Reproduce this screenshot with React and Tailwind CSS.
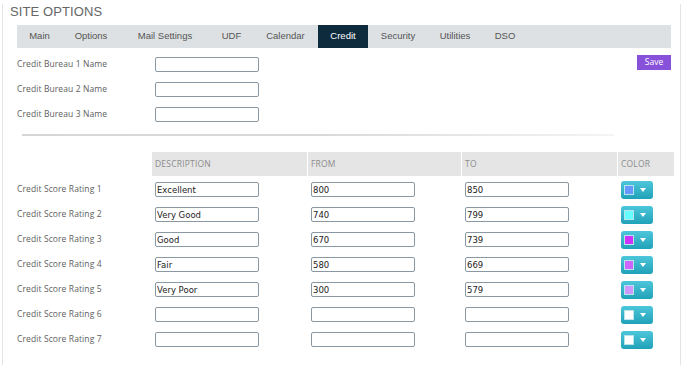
import React from 'react';

const tabs = [
  { name: 'Main', w: 'w-[45px]' },
  { name: 'Options', w: 'w-[58px]' },
  { name: 'Mail Settings', w: 'w-[90px]' },
  { name: 'UDF', w: 'w-[43px]' },
  { name: 'Calendar', w: 'w-[65px]' },
  { name: 'Credit', w: 'w-[50px]', active: true },
  { name: 'Security', w: 'w-[60px]' },
  { name: 'Utilities', w: 'w-[54px]' },
  { name: 'DSO', w: 'w-[46px]' },
];

const ratings = [
  { desc: 'Excellent', from: '800', to: '850', color: 'bg-[#6699ff]' },
  { desc: 'Very Good', from: '740', to: '799', color: 'bg-[#66ffff]' },
  { desc: 'Good', from: '670', to: '739', color: 'bg-[#cc33ff]' },
  { desc: 'Fair', from: '580', to: '669', color: 'bg-[#cc66ff]' },
  { desc: 'Very Poor', from: '300', to: '579', color: 'bg-[#cc99ff]' },
  { desc: '', from: '', to: '', color: 'bg-white' },
  { desc: '', from: '', to: '', color: 'bg-white' },
];

const labelCls = "font-['Open_Sans',sans-serif] text-[8.5px] text-[#5e5e5e] tracking-[0.1px]";
const inputCls =
  "block w-[104px] h-[15px] border border-[#8a98a3] rounded-[2px] bg-white px-[1px] font-['DejaVu_Sans',sans-serif] text-[8.5px] text-[#222] outline-none";

function TextBox({ value }) {
  return <input type="text" defaultValue={value} className={inputCls} />;
}

function ColorButton({ color }) {
  return (
    <div className="w-[32px] h-[18px] rounded-[3px] bg-gradient-to-b from-[#4cc6da] to-[#1ea2b8] flex items-center pl-[3px] gap-[6px]">
      <div className={`w-[10px] h-[10px] border border-[#b8e4ec] ${color}`}></div>
      <svg width="6" height="4" viewBox="0 0 6 4">
        <path d="M0 0 L6 0 L3 4 Z" fill="#ffffff" />
      </svg>
    </div>
  );
}

export default function App() {
  return (
    <div className="w-[682px] h-[365px] bg-white overflow-hidden">
      <div className="ml-[2px] w-[679px] h-[363px] border-x border-b border-[#e4e4e4]">
        <div className="mt-[4px] pl-[7px] leading-[16px] text-[13px] text-[#666] font-['Liberation_Sans',Arial,sans-serif] tracking-[0.1px]">
          SITE OPTIONS
        </div>

        <div className="mt-[5px] ml-[14px] w-[654px] h-[23px] bg-[#dde1e3] flex font-['Liberation_Sans',Arial,sans-serif] text-[9.5px]">
          {tabs.map((t) => (
            <div
              key={t.name}
              className={`${t.w} h-full flex items-center justify-center ${
                t.active ? 'bg-[#0e2b3e] text-white' : 'text-[#555]'
              }`}
            >
              {t.name}
            </div>
          ))}
        </div>

        <div className="mt-[4px] ml-[14px] w-[654px] flex justify-between">
          <div>
            {[1, 2, 3].map((n) => (
              <div key={n} className="h-[25px] flex items-center">
                <div className={`w-[138px] ${labelCls}`}>Credit Bureau {n} Name</div>
                <TextBox value="" />
              </div>
            ))}
          </div>
          <button className="mt-[3px] w-[34px] h-[15px] bg-[#8751d9] text-white text-[8.5px] font-['Open_Sans',sans-serif] leading-none">
            Save
          </button>
        </div>

        <div className="mt-[7px] ml-[19px] w-[592px] h-[2px] bg-gradient-to-r from-[#d6d6d6] via-[#d9d9d9] to-[#f4f4f4]"></div>

        <div className="mt-[16px] ml-[14px]">
          <div className="flex h-[24px] gap-[1px] font-['Open_Sans',sans-serif] text-[8.5px] text-[#8c8c8c] tracking-[0.2px]">
            <div className="w-[134px]"></div>
            <div className="w-[155px] bg-[#e5e5e5] flex items-center pl-[3px]">DESCRIPTION</div>
            <div className="w-[153px] bg-[#e5e5e5] flex items-center pl-[3px]">FROM</div>
            <div className="w-[155px] bg-[#e5e5e5] flex items-center pl-[3px]">TO</div>
            <div className="w-[56px] bg-[#e5e5e5] flex items-center pl-[3px]">COLOR</div>
          </div>
          <div className="mt-[1px]">
            {ratings.map((r, i) => (
              <div key={i} className="h-[25px] flex items-center gap-[1px]">
                <div className={`w-[134px] ${labelCls}`}>Credit Score Rating {i + 1}</div>
                <div className="w-[155px] pl-[3px]">
                  <TextBox value={r.desc} />
                </div>
                <div className="w-[153px] pl-[3px]">
                  <TextBox value={r.from} />
                </div>
                <div className="w-[155px] pl-[3px]">
                  <TextBox value={r.to} />
                </div>
                <div className="w-[56px] pl-[3px]">
                  <ColorButton color={r.color} />
                </div>
              </div>
            ))}
          </div>
        </div>
      </div>
    </div>
  );
}
